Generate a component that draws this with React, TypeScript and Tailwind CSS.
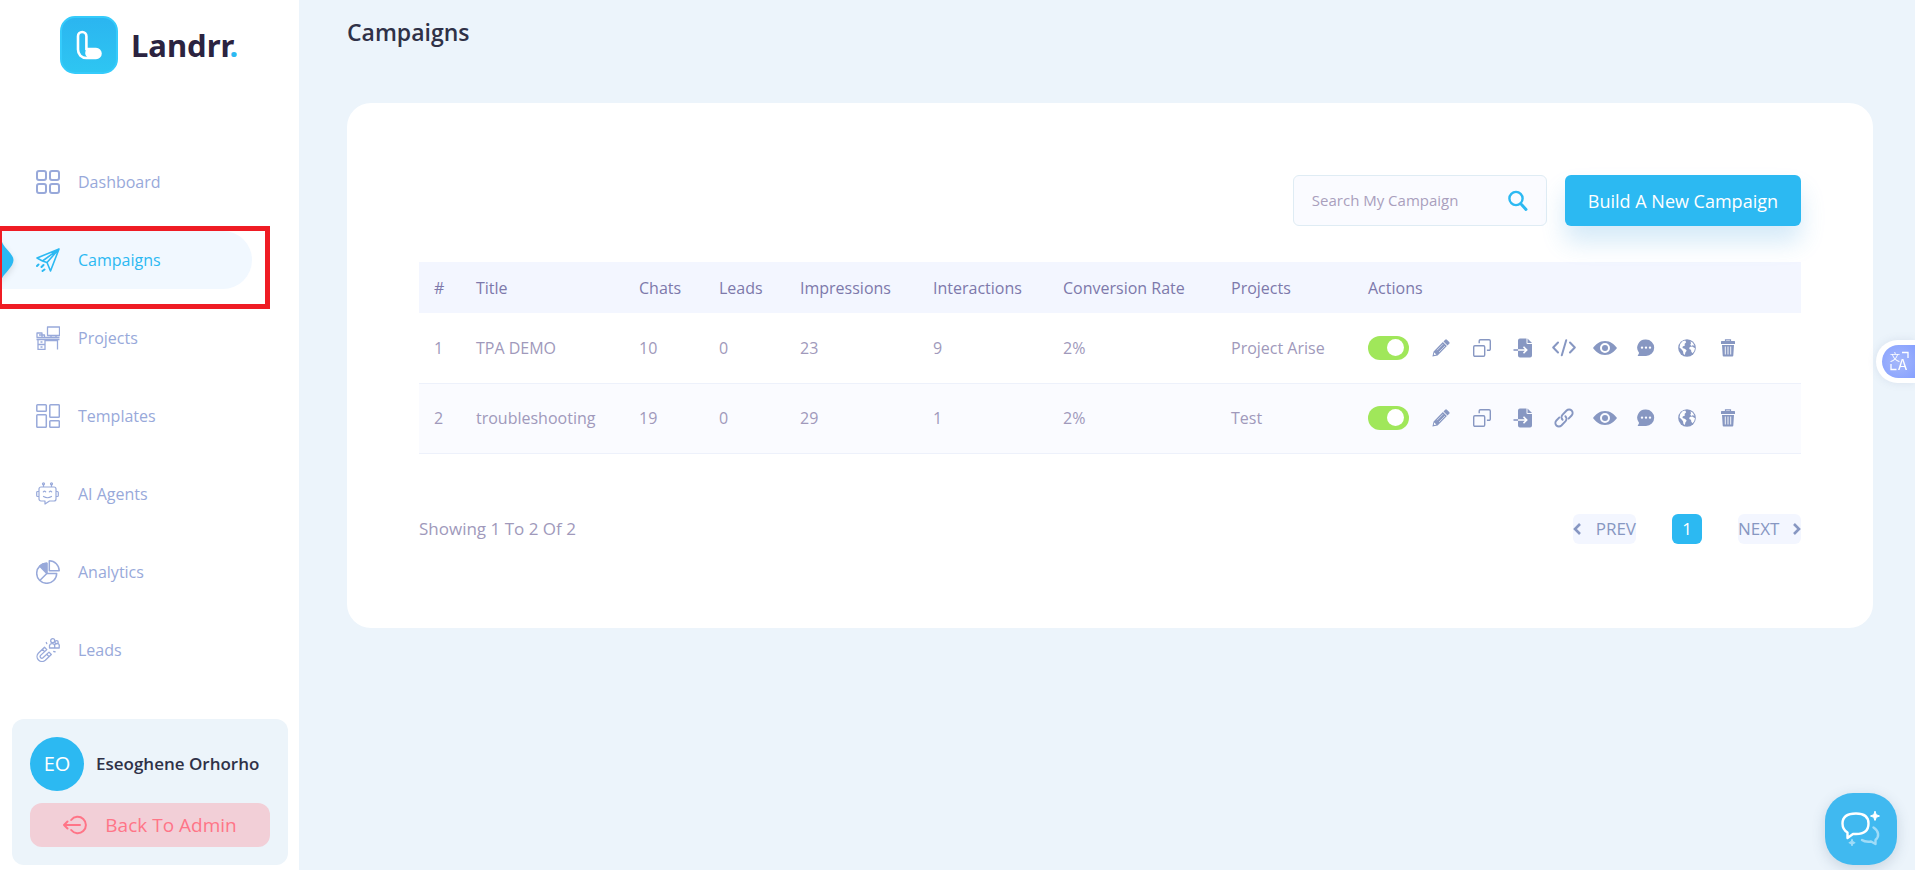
import { useState, type ReactNode } from 'react'

type Campaign = {
  id: number
  title: string
  chats: number
  leads: number
  impressions: number
  interactions: number
  conversion: string
  project: string
  share: 'embed' | 'link'
}

const campaigns: Campaign[] = [
  { id: 1, title: 'TPA DEMO', chats: 10, leads: 0, impressions: 23, interactions: 9, conversion: '2%', project: 'Project Arise', share: 'embed' },
  { id: 2, title: 'troubleshooting', chats: 19, leads: 0, impressions: 29, interactions: 1, conversion: '2%', project: 'Test', share: 'link' },
]

const columns = [
  { label: '#', width: 'w-[42px]' },
  { label: 'Title', width: 'w-[163px]' },
  { label: 'Chats', width: 'w-[80px]' },
  { label: 'Leads', width: 'w-[81px]' },
  { label: 'Impressions', width: 'w-[133px]' },
  { label: 'Interactions', width: 'w-[130px]' },
  { label: 'Conversion Rate', width: 'w-[168px]' },
  { label: 'Projects', width: 'w-[137px]' },
  { label: 'Actions', width: '' },
]

function NavSvg({ children, width = 1.5 }: { children: ReactNode; width?: number }) {
  return (
    <svg
      width="24"
      height="24"
      viewBox="0 0 24 24"
      fill="none"
      stroke="currentColor"
      strokeWidth={width}
      strokeLinecap="round"
      strokeLinejoin="round"
      className="shrink-0"
    >
      {children}
    </svg>
  )
}

const navItems = [
  {
    label: 'Dashboard',
    icon: (
      <NavSvg width={2}>
        <rect x="1" y="1" width="9" height="9" rx="2" />
        <rect x="14" y="1" width="9" height="9" rx="2" />
        <rect x="1" y="14" width="9" height="9" rx="2" />
        <rect x="14" y="14" width="9" height="9" rx="2" />
      </NavSvg>
    ),
  },
  {
    label: 'Campaigns',
    icon: (
      <NavSvg width={1.6}>
        <path d="M23 1 1 10l5.500 3L23 1Zm0 0L11 14.500 14.500 23 23 1ZM6.500 13l4.500 1.500" />
        <path d="M2.500 16.500 1 18M7.500 17l-2 2M8.500 21.500 6.500 23" strokeWidth="2" />
      </NavSvg>
    ),
  },
  {
    label: 'Projects',
    icon: (
      <NavSvg width={1.3}>
        <path d="M11.500 1h12v8.500h-12zM15 9.500v2M20 9.500v2M.5 11.500h23M.5 13.500h23M1 11.500V7h5v4.500M3 9h5.500v2.500M2 13.500v10h7v-10M2 18.500h7M4.500 16h2M4.500 21h2M9 14.500h13M21.500 14v9.500" strokeLinecap="butt" />
      </NavSvg>
    ),
  },
  {
    label: 'Templates',
    icon: (
      <NavSvg>
        <rect x=".8" y=".8" width="9.500" height="6.500" rx=".8" />
        <rect x="13.800" y=".8" width="9.500" height="12.500" rx=".8" />
        <rect x=".8" y="10.800" width="9.500" height="12.500" rx=".8" />
        <rect x="13.800" y="16.800" width="9.500" height="6.500" rx=".8" />
      </NavSvg>
    ),
  },
  {
    label: 'AI Agents',
    icon: (
      <NavSvg width={1.2}>
        <path d="M5 5h13a2 2 0 0 1 2 2v10a2 2 0 0 1-2 2h-4.500L9 22v-3H5a2 2 0 0 1-2-2V7a2 2 0 0 1 2-2ZM3 9.500H1.700a1 1 0 0 0-1 1v3a1 1 0 0 0 1 1H3M20 9.500h1.300a1 1 0 0 1 1 1v3a1 1 0 0 1-1 1H20M7.500 5V2.800M15.500 5V2.800" />
        <circle cx="7.500" cy="1.800" r="1" />
        <circle cx="15.500" cy="1.800" r="1" />
        <path d="M7.300 9.800q1.200-1.200 2.400 0M13.300 9.800q1.200-1.200 2.400 0M7.500 14.500q4 2.500 8 0" />
      </NavSvg>
    ),
  },
  {
    label: 'Analytics',
    icon: (
      <NavSvg>
        <path d="M10.800 3.300a10 10 0 1 0 9.900 10.200h-9.900V3.300ZM10.800 13.500 3.800 20.500" />
        <path d="M10.800 3.300a10 10 0 0 0-7 3l7 7.200V3.300Z" fill="currentColor" />
        <path d="M13.300.8a10 10 0 0 1 9.900 10h-9.900V.8Z" />
      </NavSvg>
    ),
  },
  {
    label: 'Leads',
    icon: (
      <NavSvg width={1.3}>
        <path d="M8.500 9.200 2.300 15.200a5 5 0 0 0 7 7.100l6-5.800-2.300-2.400-6 5.700a1.700 1.700 0 0 1-2.400-2.400l6.200-5.800-2.300-2.400ZM6.400 11.300l2.200 2.300M10.700 16.200l2.300 2.400" />
        <circle cx="16.700" cy="2.700" r="2" />
        <circle cx="20.600" cy="4.200" r="1.600" />
        <path d="M13.500 10V7.500a2.700 2.700 0 0 1 5.200 0V10h-5.200ZM18.700 10h4.500V8.200a2.300 2.300 0 0 0-4.500-1M10.300 4.500l.5 1.200M17.700 13.500l1.500.4" />
      </NavSvg>
    ),
  },
]

function PencilIcon() {
  return (
    <svg width="18" height="18" viewBox="0 0 18 18" fill="currentColor">
      <path d="M13.200.8a1.200 1.200 0 0 1 1.700 0l2.300 2.300a1.200 1.200 0 0 1 0 1.700l-1.700 1.700-4-4L13.200.8Z" />
      <path d="m10.900 3.100 4 4-9.300 9.300-5.200 1.200 1.200-5.200 9.300-9.300Z" />
      <path d="m5 11.200 6-6M7 13l6-6" stroke="#fff" strokeWidth=".6" fill="none" />
      <path d="m2.300 13.600 2 2-2 .5-.5-.5.500-2Z" fill="#fff" />
    </svg>
  )
}

function DuplicateIcon() {
  return (
    <svg width="18" height="18" viewBox="0 0 18 18" fill="none" stroke="currentColor" strokeWidth="1.400">
      <rect x=".7" y="6.700" width="11" height="10.600" rx="1.200" />
      <path d="M6.200 4.300V1.900A1.200 1.200 0 0 1 7.400.7h8.700a1.200 1.200 0 0 1 1.200 1.200v8.200a1.200 1.200 0 0 1-1.200 1.200h-2.200" />
    </svg>
  )
}

function ImportIcon() {
  return (
    <svg width="20" height="20" viewBox="0 0 20 20" fill="currentColor">
      <path d="M7 .5h6.500V5a1 1 0 0 0 1 1H19v11.500a2 2 0 0 1-2 2H7a2 2 0 0 1-2-2v-15a2 2 0 0 1 2-2Z" />
      <path d="M14.500.5 19 5h-4.500V.5Z" />
      <path d="M5 12h8.500M10.500 8.800l3.200 3.200-3.200 3.200" fill="none" stroke="#fff" strokeWidth="1.600" />
      <path d="M.5 12H5" stroke="currentColor" strokeWidth="1.600" />
    </svg>
  )
}

function CodeIcon() {
  return (
    <svg width="24" height="18" viewBox="0 0 24 18" fill="none" stroke="currentColor" strokeWidth="2" strokeLinecap="round" strokeLinejoin="round">
      <path d="M6 3.500 1.200 8.500 6 13.500M18 3.500l4.800 5-4.800 5M14.200 1.200 9.800 16.300" />
    </svg>
  )
}

function LinkIcon() {
  return (
    <svg width="20" height="20" viewBox="0 0 20 20" fill="none" stroke="currentColor" strokeWidth="1.900" strokeLinecap="round">
      <path d="M8.600 11.800a3.500 3.500 0 0 1-.2-4.900l4.200-4.400a3.500 3.500 0 0 1 5 5l-3 3.100" />
      <path d="M11.400 8.200a3.500 3.500 0 0 1 .2 4.900l-4.200 4.400a3.500 3.500 0 0 1-5-5l3-3.100" />
    </svg>
  )
}

function EyeIcon() {
  return (
    <svg width="24" height="16" viewBox="0 0 24 16" fill="currentColor" fillRule="evenodd">
      <path d="M12 1C6.500 1 2.500 4.500 0 8c2.500 3.500 6.500 7 12 7s9.500-3.500 12-7c-2.500-3.500-6.500-7-12-7Zm0 2a5 5 0 1 1 0 10 5 5 0 0 1 0-10Z" />
      <circle cx="12" cy="8" r="3" />
    </svg>
  )
}

function ChatIcon() {
  return (
    <svg width="18" height="18" viewBox="0 0 18 18" fill="currentColor" fillRule="evenodd">
      <path d="M9 .5a8.200 8.200 0 0 1 0 16.400H.6l1.500-3A8.200 8.200 0 0 1 9 .5ZM5 7.400a1.200 1.200 0 1 0 0 2.400 1.200 1.200 0 0 0 0-2.400Zm4 0a1.200 1.200 0 1 0 0 2.400 1.200 1.200 0 0 0 0-2.400Zm4 0a1.200 1.200 0 1 0 0 2.400 1.200 1.200 0 0 0 0-2.400Z" />
    </svg>
  )
}

function GlobeIcon() {
  return (
    <svg width="18" height="18" viewBox="0 0 18 18">
      <circle cx="9" cy="9" r="8.800" fill="currentColor" />
      <path d="M2.200 5 4.500 2.300l2.700-.8 1 1.700L6.500 5l.5 1.500-2.300 1L4.500 9l2.700 1 1.500 1.800-1.200 1.500-.7 2.700-1.300-1L5 12.300 3.200 10 1.500 8.500 2.200 5Z" fill="#fff" />
      <path d="m12.500 2.200 2.300 1.600 1.700 3-2-.6-1 .8-1.200-1.200.7-1.600-.5-2ZM11.700 8l2.500-.5 2.800 1.800-.8 3-1.700 2-1.200-1.500-.3-2-1.800-.8.5-2Z" fill="#fff" />
    </svg>
  )
}

function TrashIcon() {
  return (
    <svg width="16" height="18" viewBox="0 0 16 18" fill="currentColor">
      <path d="M5.500 2V.8h5V2" fill="none" stroke="currentColor" strokeWidth="1.200" />
      <path d="M1.600 2h12.800a.6.6 0 0 1 .6.600V5H1V2.600a.6.6 0 0 1 .6-.6ZM2 6h12l-.7 10.500a1 1 0 0 1-1 1H3.700a1 1 0 0 1-1-1L2 6Z" />
      <path d="M5.300 7.500v8M8 7.500v8M10.700 7.500v8" stroke="#fff" strokeWidth=".9" />
    </svg>
  )
}

function SearchIcon() {
  return (
    <svg width="20" height="22" viewBox="0 0 20 22" fill="none" stroke="currentColor" strokeLinecap="round">
      <circle cx="8" cy="8.500" r="6.600" strokeWidth="2.400" />
      <path d="m13.500 14.500 4.500 5" strokeWidth="3" />
    </svg>
  )
}

function Logo() {
  return (
    <a href="#" className="flex items-center gap-[13px] pl-[60px]">
      <svg width="58" height="58" viewBox="0 0 58 58" fill="none">
        <defs>
          <linearGradient id="logo-bg" x1="0" y1="0" x2="0" y2="1">
            <stop stopColor="#2bb5f0" />
            <stop offset="1" stopColor="#2ec6f2" />
          </linearGradient>
        </defs>
        <rect x="1" y="1" width="56" height="56" rx="14" fill="url(#logo-bg)" stroke="#35cbfb" strokeWidth="2" />
        <path
          d="M18 20.200a4.200 4.200 0 0 1 8.400 0V33h9.600a4.500 4.500 0 0 1 0 9H26.400c-5 0-8.400-3.500-8.400-8.400V20.200Z"
          stroke="#fff"
          strokeWidth="2.600"
        />
        <path d="M26.400 33h9.600a4.500 4.500 0 0 1 0 9h-7.500c-3-1.500-4.500-5-2.100-9Z" fill="#fff" />
      </svg>
      <span className="font-['Noto_Sans',sans-serif] text-[31px] leading-none font-bold text-[#2b2340]">
        Landrr<span className="text-[#2cb9f2]">.</span>
      </span>
    </a>
  )
}

function Sidebar() {
  return (
    <aside className="flex min-h-screen w-[299px] shrink-0 flex-col bg-white pt-4">
      <Logo />

      <nav className="mt-[79px] flex flex-col gap-5">
        {navItems.map((item) => {
          const active = item.label === 'Campaigns'
          return (
            <div key={item.label} className="relative">
              <a
                href="#"
                className={`flex h-[58px] w-[252px] items-center gap-[18px] rounded-r-full pl-9 text-base font-medium ${
                  active ? 'bg-[#f1f8ff] text-[#2cb9f2]' : 'text-[#98a9da]'
                }`}
              >
                {item.icon}
                {item.label}
              </a>
              {active && (
                <>
                  <svg width="14" height="50" viewBox="0 0 14 50" className="absolute top-1 left-0 drop-shadow-md">
                    <path d="M0 0C1 7 4 11 8 15.500 11.500 19.500 13.500 22 13.500 25S11.500 31.500 8 35.500C4 40 1 43 0 50V0Z" fill="#2cb9f2" />
                  </svg>
                  <div className="pointer-events-none absolute -top-[5px] -left-[3px] h-[83px] w-[273px] border-5 border-[#ef1c24]" />
                </>
              )}
            </div>
          )
        })}
      </nav>

      <div className="mx-3 mt-auto mb-[5px] w-[276px] rounded-xl bg-[#ecf4fa] p-[18px]">
        <div className="flex items-center gap-3">
          <span className="flex size-[54px] shrink-0 items-center justify-center rounded-full bg-[#2cb9f2] text-xl font-medium text-white">
            EO
          </span>
          <span className="text-[17px] font-semibold whitespace-nowrap text-[#2f3147]">Eseoghene Orhorho</span>
        </div>
        <button
          type="button"
          className="mt-3 flex h-11 w-full items-center justify-center gap-[18px] rounded-xl bg-[#f2cfd7] text-[19px] font-medium text-[#ff7587]"
        >
          <svg width="24" height="20" viewBox="0 0 24 20" fill="none" stroke="currentColor" strokeWidth="2" strokeLinecap="round" strokeLinejoin="round">
            <path d="M17 10H1M4.500 6.500 1 10l3.500 3.500M8.200 5a8.200 8.200 0 1 1 0 10" />
          </svg>
          Back To Admin
        </button>
      </div>
    </aside>
  )
}

function Toggle({ label }: { label: string }) {
  const [on, setOn] = useState(true)

  return (
    <label className="relative mr-5 block h-6 w-[41px] shrink-0 cursor-pointer">
      <input
        type="checkbox"
        aria-label={label}
        checked={on}
        onChange={() => setOn(!on)}
        className="peer block h-6 w-[41px] cursor-pointer appearance-none rounded-full bg-gray-300 checked:bg-[#a0e75a]"
      />
      <span className="pointer-events-none absolute top-[3px] left-1 size-[17px] rounded-full bg-white peer-checked:left-[19px]" />
    </label>
  )
}

function RowActions({ campaign }: { campaign: Campaign }) {
  const actions = [
    { name: 'Edit', icon: <PencilIcon /> },
    { name: 'Duplicate', icon: <DuplicateIcon /> },
    { name: 'Import', icon: <ImportIcon /> },
    campaign.share === 'embed'
      ? { name: 'Embed code', icon: <CodeIcon /> }
      : { name: 'Copy link', icon: <LinkIcon /> },
    { name: 'Preview', icon: <EyeIcon /> },
    { name: 'Conversations', icon: <ChatIcon /> },
    { name: 'Domain', icon: <GlobeIcon /> },
    { name: 'Delete', icon: <TrashIcon /> },
  ]

  return (
    <div className="flex items-center">
      <Toggle label={`${campaign.title} active`} />
      <div className="flex gap-[17px] text-[#8797c2]">
        {actions.map((action) => (
          <button
            key={action.name}
            type="button"
            aria-label={action.name}
            className="flex size-6 items-center justify-center hover:text-[#2cb9f2]"
          >
            {action.icon}
          </button>
        ))}
      </div>
    </div>
  )
}

function CampaignTable({ rows }: { rows: Campaign[] }) {
  return (
    <table className="mt-9 w-full table-fixed text-left text-base">
      <thead className="bg-[#f3f6ff] text-[#7d79ab]">
        <tr className="h-[51px]">
          {columns.map((col) => (
            <th key={col.label} className={`pl-[15px] font-medium whitespace-nowrap ${col.width}`}>
              {col.label}
            </th>
          ))}
        </tr>
      </thead>
      <tbody className="text-[#a099bb]">
        {rows.map((c) => (
          <tr key={c.id} className="h-[70px] border-b border-[#edf1fb] even:bg-[#fafbff]">
            <td className="pl-[15px]">{c.id}</td>
            <td className="pl-[15px]">{c.title}</td>
            <td className="pl-[15px]">{c.chats}</td>
            <td className="pl-[15px]">{c.leads}</td>
            <td className="pl-[15px]">{c.impressions}</td>
            <td className="pl-[15px]">{c.interactions}</td>
            <td className="pl-[15px]">{c.conversion}</td>
            <td className="pl-[15px] whitespace-nowrap">{c.project}</td>
            <td className="pl-[15px]">
              <RowActions campaign={c} />
            </td>
          </tr>
        ))}
      </tbody>
    </table>
  )
}

function Pagination() {
  return (
    <div className="mt-[60px] flex items-center justify-between text-[17px]">
      <p className="text-[#a099bb]">Showing 1 To 2 Of 2</p>
      <div className="flex items-center gap-9 text-[#8797c2]">
        <button type="button" className="flex h-[30px] w-[63px] items-center justify-between rounded-md bg-[#f3f6ff]">
          <svg width="8" height="12" viewBox="0 0 8 12" fill="none" stroke="currentColor" strokeWidth="2.600">
            <path d="M7 1 2 6l5 5" />
          </svg>
          PREV
        </button>
        <button type="button" className="size-[30px] rounded-md bg-[#2cb9f2] font-medium text-white">
          1
        </button>
        <button type="button" className="flex h-[30px] w-[63px] items-center justify-between rounded-md bg-[#f3f6ff]">
          NEXT
          <svg width="8" height="12" viewBox="0 0 8 12" fill="none" stroke="currentColor" strokeWidth="2.600">
            <path d="m1 1 5 5-5 5" />
          </svg>
        </button>
      </div>
    </div>
  )
}

function TranslateTab() {
  return (
    <button
      type="button"
      aria-label="Translate page"
      className="fixed top-[340px] right-0 rounded-l-full bg-white py-[5px] pl-[6px] shadow-[0_0_8px_rgba(100,120,160,0.15)]"
    >
      <span className="block h-[33px] w-[33px] rounded-l-full bg-radial from-[#a6b8fa] to-[#86a0ff]">
        <svg width="33" height="33" viewBox="0 0 33 33" fill="#fff" fontFamily="'Noto Sans CJK SC', sans-serif">
          <text x="8" y="16" fontSize="10">文</text>
          <text x="16" y="25" fontSize="15">A</text>
          <path d="M20 7.500h6V13M9 19v5.500h5.500" fill="none" stroke="#fff" strokeWidth="1.300" />
        </svg>
      </span>
    </button>
  )
}

function ChatLauncher() {
  return (
    <button
      type="button"
      aria-label="Open chat"
      className="fixed right-[18px] bottom-[5px] flex size-[72px] items-center justify-center rounded-[28px] bg-[#40b9f0] shadow-[0_4px_14px_rgba(60,90,120,0.2)]"
    >
      <svg width="40" height="36" viewBox="0 0 40 36" fill="none" strokeLinecap="round" strokeLinejoin="round">
        <path
          d="M15 2.500c8.500 0 12.500 3.500 12.500 10S23.500 23 15 23c-1 0-2 0-3 0L6.500 27V21.500C3 19.500 1.500 16.500 1.500 12.500c0-6.500 5-10 13.500-10Z"
          stroke="#fff"
          strokeWidth="2.400"
        />
        <path d="M32.500 16.500c5.500 3.500 6 9 2 12.500v4l-4.500-2.500c-4 .5-7 0-9-1.500" stroke="#9fdcf8" strokeWidth="2.400" />
        <path d="m34 .5 1.300 3.200 3.200 1.300-3.200 1.300L34 9.500l-1.300-3.200L29.500 5l3.200-1.300L34 .5Z" fill="#fff" stroke="#fff" />
        <path d="m11 28.500 1 2.200 2.200 1-2.200 1-1 2.200-1-2.200-2.200-1 2.200-1 1-2.200Z" fill="#9fdcf8" stroke="#9fdcf8" />
      </svg>
    </button>
  )
}

export default function App() {
  return (
    <div className="flex min-h-screen bg-[#ecf4fb] font-['Open_Sans',sans-serif]">
      <Sidebar />

      <main className="min-w-0 flex-1 pt-4 pr-[42px] pl-12">
        <h1 className="text-[23px] leading-8 font-semibold text-[#2f3147]">Campaigns</h1>

        <section className="mt-[55px] rounded-3xl bg-white px-[72px] pt-[72px] pb-[84px]">
          <div className="flex justify-end gap-[18px]">
            <label className="flex h-[51px] w-[254px] items-center rounded-md border border-[#dfecf4] bg-[#fafbff] px-[18px]">
              <input
                type="text"
                aria-label="Search my campaign"
                placeholder="Search My Campaign"
                className="min-w-0 flex-1 bg-transparent text-[15px] text-[#a099bb] outline-none placeholder:text-[#a99fbd]"
              />
              <span className="text-[#2cb9f2]">
                <SearchIcon />
              </span>
            </label>
            <button
              type="button"
              className="h-[51px] rounded-md bg-[#2cb9f2] px-[23px] text-lg font-medium text-white shadow-[0_16px_24px_rgba(44,150,220,0.2)]"
            >
              Build A New Campaign
            </button>
          </div>

          <CampaignTable rows={campaigns} />
          <Pagination />
        </section>
      </main>

      <TranslateTab />
      <ChatLauncher />
    </div>
  )
}
